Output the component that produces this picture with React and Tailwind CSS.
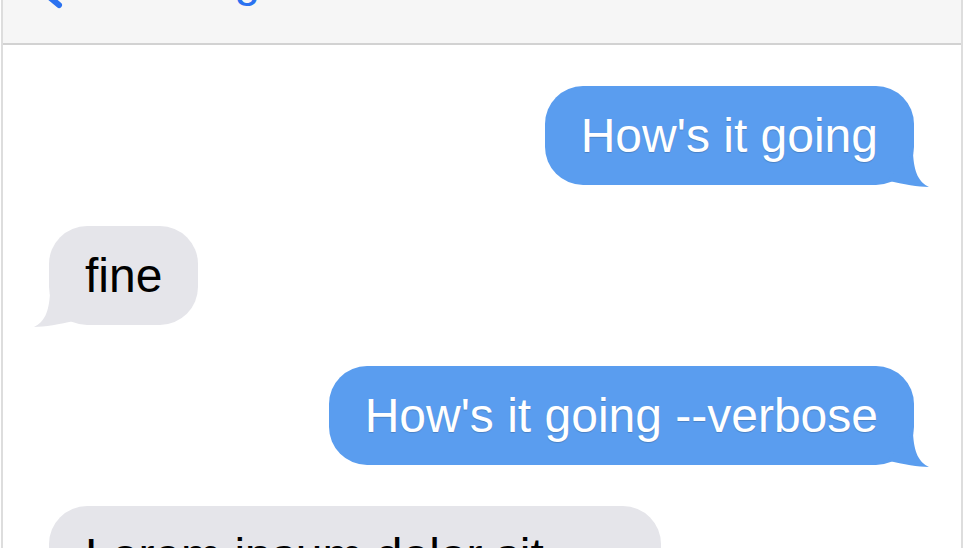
import React from "react";

const messages = [
  { id: 1, fromMe: true, text: "How's it going" },
  { id: 2, fromMe: false, text: "fine" },
  { id: 3, fromMe: true, text: "How's it going --verbose" },
  {
    id: 4,
    fromMe: false,
    text: "Lorem ipsum dolor sit amet, consectetur adipiscing elit, sed do eiusmod tempor incididunt ut labore.",
  },
];

// ==========================
// TAIL
// ==========================
function Tail({ fromMe }) {
  return (
    <svg
      width="50"
      height="40"
      viewBox="0 0 50 40"
      className={
        fromMe
          ? "absolute right-[-20px] bottom-[-4px]"
          : "absolute left-[-20px] bottom-[-4px] -scale-x-100"
      }
    >
      <path
        d="M6 28 L29 4 C30 24 35 33 45 38 C34 38 20 35 4 32 Z"
        fill={fromMe ? "#5a9def" : "#e5e5ea"}
      />
    </svg>
  );
}

// ==========================
// BUBBLE
// ==========================
function Bubble({ fromMe, text }) {
  return (
    <div className={fromMe ? "flex justify-end" : "flex justify-start"}>
      <div
        className={
          fromMe
            ? "relative max-w-[612px] rounded-[38px] bg-[#5a9def] px-[36px] py-[22px] text-[48px] leading-[55px] text-white [text-shadow:0_1px_1px_rgba(0,0,0,0.18)]"
            : "relative max-w-[612px] rounded-[38px] bg-[#e5e5ea] px-[36px] py-[22px] text-[48px] leading-[55px] text-black"
        }
      >
        <Tail fromMe={fromMe} />
        <span className="relative">{text}</span>
      </div>
    </div>
  );
}

export default function App() {
  return (
    <div className="h-[548px] w-full overflow-hidden bg-white font-['Liberation_Sans',Arial,sans-serif]">
      <div className="ml-[1px] w-[962px] border-x-2 border-[#dddddd] min-h-[548px]">
        {/* HEADER */}
        <div className="h-[45px] overflow-hidden border-b-2 border-[#d2d2d2] bg-[#f6f6f6]">
          <div className="-mt-[41px] flex items-start gap-[22px] pl-[14px]">
            <svg width="60" height="60" viewBox="0 0 60 60" className="shrink-0">
              <path
                d="M48 6 L18 26 L42 46"
                fill="none"
                stroke="#2b72f0"
                strokeWidth="6"
                strokeLinecap="round"
                strokeLinejoin="round"
              />
            </svg>
            <span className="mt-[-2px] text-[46px] leading-none text-[#2b72f0]">
              Messages
            </span>
          </div>
        </div>

        {/* CHAT */}
        <div className="flex flex-col gap-[41px] pt-[41px] pl-[46px] pr-[47px]">
          {messages.map((m) => (
            <Bubble key={m.id} fromMe={m.fromMe} text={m.text} />
          ))}
        </div>
      </div>
    </div>
  );
}
